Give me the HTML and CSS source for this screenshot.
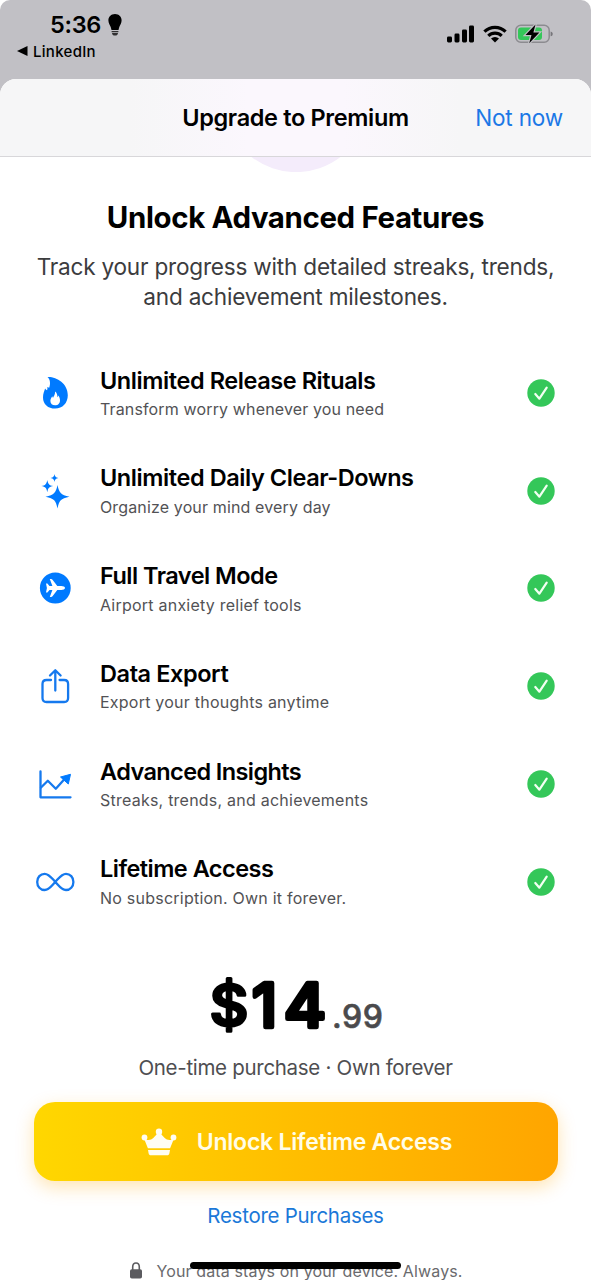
FILE: index.html
```html
<!DOCTYPE html>
<html lang="en">
<head>
<meta charset="utf-8">
<title>Upgrade to Premium</title>
<link rel="stylesheet" href="styles.css">
</head>
<body>
<div class="phone">
  <div class="status">
    <div class="status-left">
      <div class="clock"><span class="time">5:36</span>
        <svg class="bulb" width="14" height="22" viewBox="0 0 14 22"><path d="M7 0C3 0 .4 2.900.4 6.400c0 2.700 1.500 4.300 2.300 6.500.4 1.200.6 2.200.8 3.100h7c.2-.9.4-1.900.8-3.100.8-2.200 2.300-3.800 2.300-6.500C13.600 2.900 11 0 7 0z"/><path d="M3.600 17h6.800v1.300H3.600zM4 19h6c0 1.700-1.300 2.600-3 2.600S4 20.700 4 19z" opacity=".75"/></svg>
      </div>
      <div class="back"><svg width="11" height="10" viewBox="0 0 11 10"><path d="M0 5 10.500 0v10z"/></svg><span>LinkedIn</span></div>
    </div>
    <div class="status-right">
      <svg width="28" height="18" viewBox="0 0 28 18"><rect x="0" y="11.500" width="5" height="6" rx="1.400"/><rect x="7.500" y="8.500" width="5" height="9" rx="1.400"/><rect x="15" y="4.500" width="5" height="13" rx="1.400"/><rect x="22" y="0.500" width="5" height="17" rx="1.400"/></svg>
      <svg width="24" height="18" viewBox="0 0 24 18"><g fill="none" stroke="#000" stroke-width="3.200"><path d="M1.400 6.600a15.300 15.300 0 0 1 21.200 0"/><path d="M5.300 10.800a9.700 9.700 0 0 1 13.400 0"/></g><path d="M8 13.500a6 6 0 0 1 8 0L12 17.600z"/></svg>
      <svg class="battery" width="38" height="20" viewBox="0 0 38 20"><rect x=".8" y="1.300" width="33.400" height="17" rx="5" fill="none" stroke="#8c8b90" stroke-width="1.500"/><path d="M35.600 7.500c1.600.4 2.100 1.300 2.100 2.400s-.5 2-2.100 2.400z" fill="#77767b"/><rect x="3" y="3.500" width="24" height="12.600" rx="3" fill="#34c759"/><path d="M20.500.6 10.500 11h6l-2.300 8.200L24.400 8.500h-6z" stroke="#c1c0c5" stroke-width="2.400" paint-order="stroke"/></svg>
    </div>
  </div>

  <main class="sheet">
    <header class="nav"><h1>Upgrade to Premium</h1><a class="dismiss">Not now</a></header>
    <div class="halo"><svg width="100" height="15" viewBox="0 0 100 15"><path d="M5.500 0a73 73 0 0 0 89 0z" fill="#f4ecfb"/></svg></div>

    <section class="intro">
      <h2>Unlock Advanced Features</h2>
      <p>Track your progress with detailed streaks, trends,<br>and achievement milestones.</p>
    </section>

    <ul class="features">
      <li>
        <svg class="icon" viewBox="0 0 44 44"><path fill="#007aff" fill-rule="evenodd" d="M14.500 6c8.500-.6 20.300 6 20.300 18.200C34.800 32 29.500 37.500 22.200 37.500 15 37.500 10 33.200 10 26.400c0-3.600 1.300-6.300 2.100-8.800.4.9 1.200 1.500 2 1.700.4-1.300.5-2.200.1-3.200l2 .7c1.400-3.900 1.200-8-1.700-10.800zM22.100 20.500c.2 3.100-1.400 4.500-2 6.300-.5-.3-.7-.9-.8-1.600-1.200 1.600-1.900 3.200-1.900 4.700 0 2.700 1.900 4.400 4.700 4.400s4.900-1.900 4.900-4.900c0-2-.7-3.500-1.700-4.900-.1.800-.4 1.300-.9 1.700.1-2.500-.6-4.400-2.300-5.700z"/></svg>
        <div class="copy"><h3>Unlimited Release Rituals</h3><p class="wide-s">Transform worry whenever you need</p></div>
        <svg class="check" viewBox="0 0 28 28"><circle cx="14" cy="14" r="13.700"/><path d="M8.300 15l4.100 4.700 7.300-11"/></svg>
      </li>
      <li>
        <svg class="icon" viewBox="0 0 44 44"><path fill="#007aff" d="M24.500 16c1.700 7.700 3.100 9.900 12 11.800-8.900 1.700-10.300 4-12 11.700-1.700-7.700-3.100-10-12-11.700 8.900-1.900 10.300-4.100 12-11.800zM14.300 11c.9 4.200 1.700 5.300 6 6.100-4.300.8-5.100 1.900-6 6.100-.9-4.200-1.700-5.300-6-6.100 4.300-.8 5.100-1.900 6-6.100zM21.500 5c.6 2.800 1.200 3.500 4 4-2.800.5-3.400 1.200-4 4-.6-2.800-1.200-3.500-4-4 2.800-.5 3.400-1.200 4-4z"/></svg>
        <div class="copy"><h3>Unlimited Daily Clear-Downs</h3><p class="wide-s">Organize your mind every day</p></div>
        <svg class="check" viewBox="0 0 28 28"><circle cx="14" cy="14" r="13.700"/><path d="M8.300 15l4.100 4.700 7.300-11"/></svg>
      </li>
      <li>
        <svg class="icon" viewBox="0 0 44 44"><circle cx="22.300" cy="22" r="15.400" fill="#007aff"/><path fill="#fff" d="M32 22c0-1.200-1.800-1.900-3.700-1.900h-4l-4.800-6.400c-.4-.5-.8-.7-1.400-.7h-1.300l2.600 7.100h-2.900l-2.100-2.500H13l.9 4.400-.9 4.400h1.400l2.100-2.500h2.900L16.800 31h1.300c.6 0 1-.2 1.400-.7l4.800-6.400h4c1.900 0 3.700-.7 3.700-1.900z"/></svg>
        <div class="copy"><h3 class="tight">Full Travel Mode</h3><p>Airport anxiety relief tools</p></div>
        <svg class="check" viewBox="0 0 28 28"><circle cx="14" cy="14" r="13.700"/><path d="M8.300 15l4.100 4.700 7.300-11"/></svg>
      </li>
      <li>
        <svg class="icon" viewBox="0 0 44 44"><g class="line"><path d="M18 16h-4.500c-2.500 0-4 1.400-4 4v14c0 2.600 1.500 4 4 4h17.600c2.500 0 4-1.400 4-4V20c0-2.600-1.500-4-4-4h-4.500"/><path d="M22.300 26.500V6.500M17 11.500l5.300-5.300 5.300 5.300"/></g></svg>
        <div class="copy"><h3>Data Export</h3><p>Export your thoughts anytime</p></div>
        <svg class="check" viewBox="0 0 28 28"><circle cx="14" cy="14" r="13.700"/><path d="M8.300 15l4.100 4.700 7.300-11"/></svg>
      </li>
      <li>
        <svg class="icon" viewBox="0 0 44 44"><g class="line"><path d="M7.500 9.500v25.800h30"/><path d="M8 25.500l6.800-6.800 8 8 9-10"/></g><path d="M37.500 12.300l-2.200 9.700-7.800-7z" fill="#007aff" stroke="#007aff" stroke-linejoin="round"/></svg>
        <div class="copy"><h3 class="tighter">Advanced Insights</h3><p>Streaks, trends, and achievements</p></div>
        <svg class="check" viewBox="0 0 28 28"><circle cx="14" cy="14" r="13.700"/><path d="M8.300 15l4.100 4.700 7.300-11"/></svg>
      </li>
      <li>
        <svg class="icon" viewBox="0 0 44 44"><path class="line" d="M22.300 21.900C18.700 18 16 13.800 11.600 13.800c-4.200 0-7.400 3.500-7.400 8.100s3.200 8.100 7.400 8.100c4.400 0 7.100-4.200 10.700-8.100s6.300-8.100 10.700-8.100c4.200 0 7.400 3.500 7.400 8.100s-3.200 8.100-7.400 8.100c-4.400 0-7.100-4.200-10.700-8.100z"/></svg>
        <div class="copy"><h3 class="tight">Lifetime Access</h3><p>No subscription. Own it forever.</p></div>
        <svg class="check" viewBox="0 0 28 28"><circle cx="14" cy="14" r="13.700"/><path d="M8.300 15l4.100 4.700 7.300-11"/></svg>
      </li>
    </ul>

    <section class="purchase">
      <svg class="price" width="190" height="96" viewBox="0 0 190 96"><g class="whole"><text class="dollar" x="8.500" y="64.500" textLength="39" lengthAdjust="spacingAndGlyphs">$</text><text x="51" y="65.500">1</text><text x="83" y="65.500" textLength="42" lengthAdjust="spacingAndGlyphs">4</text></g><text class="cents" x="131" y="67" textLength="51">.99</text></svg>
      <p class="terms">One-time purchase · Own forever</p>
      <button class="cta">
        <svg width="36" height="28" viewBox="0 0 36 28" fill="#fffdf2"><circle cx="18" cy="3.700" r="3.200"/><circle cx="3.500" cy="9.500" r="2.900"/><circle cx="32.500" cy="9.500" r="2.900"/><path d="M3 10.500c3 2.300 7 2 9.300-.4 2-2.100 3.500-3.500 4.300-5h2.800c.8 1.500 2.300 2.900 4.300 5 2.300 2.400 6.300 2.700 9.300.4l-3.900 9.800H6.900zM7 22h22l-.6 3.300c-.3 1.400-1 2-2.300 2H9.900c-1.300 0-2-.6-2.300-2z"/></svg>
        <span>Unlock Lifetime Access</span>
      </button>
      <a class="restore">Restore Purchases</a>
      <div class="privacy"><svg width="12" height="17" viewBox="0 0 12 17"><path d="M2.700 8V5c0-2.500 1.200-4 3.300-4s3.300 1.500 3.300 4v3" fill="none" stroke="#5b5b5f" stroke-width="1.600"/><rect x="0" y="7.300" width="12" height="9.300" rx="1.800" fill="#5b5b5f"/></svg><span>Your data stays on your device. Always.</span></div>
    </section>
  </main>
  <div class="home-indicator"></div>
</div>
</body>
</html>
```
FILE: styles.css
```css
* { box-sizing: border-box; margin: 0; padding: 0; }
body { background: #fff; font-family: Inter, "Liberation Sans", sans-serif; color: #000; }
svg { display: block; flex: none; }
h1, h2, h3, p, a, span { white-space: nowrap; }
.phone { position: relative; width: 591px; height: 1280px; overflow: hidden; background: #c1c0c5; border-radius: 10px 10px 0 0; }

.status { height: 79px; display: flex; justify-content: space-between; }
.status-left { padding: 9px 0 0 17px; }
.clock { display: flex; align-items: center; padding-left: 33px; gap: 7px; height: 31px; }
.time { font-size: 23.5px; font-weight: 580; letter-spacing: -0.3px; }
.back { display: flex; align-items: center; gap: 5px; height: 22px; font-size: 15px; font-weight: 450; letter-spacing: 0.3px; }
.status-right { display: flex; align-items: flex-start; gap: 8px; padding: 25px 38px 0 0; }
.battery { margin-top: -1px; }

.sheet { height: 1201px; background: #fff; border-radius: 16px 16px 0 0; overflow: hidden; }
.nav { height: 78px; display: grid; grid-template-columns: 1fr auto 1fr; align-items: center; padding: 0 28px; background: linear-gradient(90deg, #f6f6f7 22%, #fbf7fd 42%, #fbf7fd 58%, #f6f6f7 78%); border-bottom: 1px solid #d8d7da; }
.nav h1 { grid-column: 2; font-size: 23.5px; font-weight: 600; letter-spacing: -0.35px; }
.dismiss { justify-self: end; font-size: 22.5px; letter-spacing: -0.15px; color: #1b78e6; }
.halo { height: 15px; display: flex; justify-content: center; }

.intro { padding-top: 26px; text-align: center; height: 172px; }
.intro h2 { font-size: 29.4px; line-height: 40px; font-weight: 700; letter-spacing: -0.35px; }
.intro p { margin-top: 13.5px; font-size: 22.6px; line-height: 30.5px; letter-spacing: -0.22px; color: #3c3c3e; }

.features { list-style: none; padding: 0 36px 0 33px; }
.features li { height: 97.75px; display: flex; align-items: center; }
.icon { width: 44px; height: 44px; }
.line { fill: none; stroke: #1579ee; stroke-width: 2.3; stroke-linecap: round; stroke-linejoin: round; }
.copy { flex: 1; margin-left: 23px; }
.copy h3 { font-size: 23.5px; line-height: 30px; font-weight: 600; letter-spacing: -0.42px; }
.copy h3.tight { letter-spacing: -0.52px; }
.copy h3.tighter { letter-spacing: -0.6px; }
.copy p { margin-top: 2.5px; font-size: 16px; line-height: 22px; letter-spacing: 0.23px; color: #525255; }
.copy p.wide-s { letter-spacing: 0.14px; }
.check { width: 28px; height: 28px; }
.check circle { fill: #34c759; }
.check path { fill: none; stroke: #f2fff2; stroke-width: 2.2; stroke-linecap: round; stroke-linejoin: round; }

.purchase { display: flex; flex-direction: column; align-items: center; padding-top: 30px; }
.price .whole { font-size: 60px; font-weight: 500; stroke: #000; stroke-width: 4.5; stroke-linejoin: round; }
.price .dollar { font-size: 57px; stroke-width: 3; }
.price .cents { font-size: 32px; font-weight: 500; fill: #4a4a4c; stroke: #4a4a4c; stroke-width: .6; stroke-linejoin: round; }
.terms { margin-top: -4px; font-size: 20.5px; line-height: 30px; letter-spacing: -0.3px; color: #4e4e51; }
.cta { margin-top: 19.5px; width: 524px; height: 79px; border: 0; border-radius: 21px; display: flex; align-items: center; justify-content: center; gap: 20px; padding: 1px 0 0 2px; font-family: inherit; font-size: 23px; font-weight: 600; letter-spacing: -0.24px; color: #fffde8; background: linear-gradient(90deg, #ffd700, #ffa500); box-shadow: 0 6px 18px rgba(255, 165, 0, .3); }
.restore { margin-top: 20px; font-size: 20.5px; line-height: 30px; letter-spacing: -0.28px; color: #1b78d8; }
.privacy { margin-top: 28.5px; display: flex; align-items: center; gap: 14px; padding-left: 2px; font-size: 16px; line-height: 22px; letter-spacing: 0.13px; color: #6a6a6d; }
.home-indicator { position: absolute; left: 190px; top: 1262px; width: 211px; height: 7px; border-radius: 4px; background: #000; }
```
